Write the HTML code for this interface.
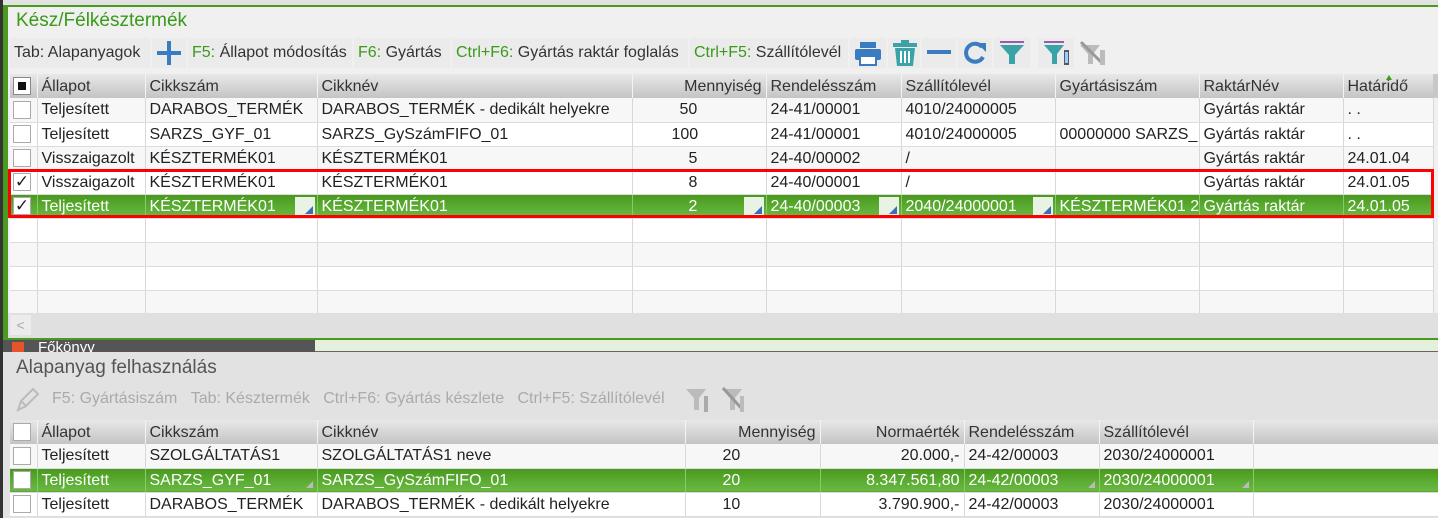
<!DOCTYPE html>
<html><head><meta charset="utf-8"><style>
*{margin:0;padding:0;box-sizing:border-box}
body{width:1438px;height:518px;overflow:hidden;background:#e2e2e2;font-family:"Liberation Sans Narrow","Liberation Sans",sans-serif;font-size:16px;color:#222;position:relative}
.abs{position:absolute}
table{border-collapse:collapse;table-layout:fixed;position:absolute}
td{height:24px;border-right:1px solid #d8d8d8;border-bottom:1px solid #dcdcdc;padding:0 4px;white-space:nowrap;overflow:hidden;line-height:23px;background:#fff;position:relative}
tr.alt td{background:#f7f7f7}
tr.h td{background:linear-gradient(#e8e8e8,#c4c4c4);border-right:1px solid #f4f4f4;border-bottom:none;height:24px;color:#333}
tr.sel td{background:linear-gradient(#4a981e,#5cae34 60%,#6cb844);color:#fff;border-right:1px solid #8cc86c}
td.r{text-align:right}
td.cb{padding:0 0 0 3px}
.box{width:18px;height:18px;border:1px solid #aaa;background:#fff;display:inline-block;vertical-align:middle;position:relative}
.tri{position:absolute;right:2px;bottom:2px;width:0;height:0;border-left:8px solid transparent;border-bottom:8px solid #3a6fb8}
.edit{position:absolute;right:2px;top:2px;bottom:2px;width:20px;background:#e9f3e4}
.trig{position:absolute;right:4px;bottom:4px;width:0;height:0;border-left:7px solid transparent;border-bottom:7px solid #bbb}
.tb{position:absolute;height:30px;background:#ebebeb;line-height:30px;padding:0 4px;font-size:16px;color:#333}
.tb b{font-weight:normal;color:#3a9a1a}
.tb2{color:#aaa;position:absolute;line-height:30px;font-size:16px}
</style></head><body>
<div class="abs" style="left:0;top:0;width:3px;height:518px;background:#333"></div>
<div class="abs" style="left:3px;top:5px;width:5px;height:333px;background:#4a9a20"></div>
<div class="abs" style="left:3px;top:5px;width:1435px;height:2px;background:#4a9a20"></div>
<div class="abs" style="left:8px;top:7px;width:1430px;height:331px;background:#f0f0f0"></div>
<div class="abs" style="left:16px;top:8px;font-size:19px;color:#3a9a1a;line-height:26px">Kész/Félkésztermék</div>
<div class="tb" style="left:10px;top:38px;width:140px">Tab: Alapanyagok</div>
<div class="tb" style="left:152px;top:38px;width:34px"><svg width="26" height="26" style="margin-top:2px"><rect x="11" y="1" width="4" height="24" fill="#3b7bc0"/><rect x="1" y="11" width="24" height="4" fill="#3b7bc0"/></svg></div>
<div class="tb" style="left:188px;top:38px;width:164px"><b>F5:</b> Állapot módosítás</div>
<div class="tb" style="left:354px;top:38px;width:96px"><b>F6:</b> Gyártás</div>
<div class="tb" style="left:452px;top:38px;width:236px"><b>Ctrl+F6:</b> Gyártás raktár foglalás</div>
<div class="tb" style="left:690px;top:38px;width:158px"><b>Ctrl+F5:</b> Szállítólevél</div>
<div class="tb" style="left:850px;top:38px;width:36px"><svg width="28" height="28" style="margin-top:1px"><rect x="6" y="3" width="16" height="6" fill="#3b7bc0"/><rect x="1" y="10" width="26" height="11" rx="2" fill="#3b7bc0"/><rect x="6" y="17" width="16" height="9" fill="#fff" stroke="#3b7bc0" stroke-width="2"/></svg></div>
<div class="tb" style="left:888px;top:38px;width:32px"><svg width="26" height="28" style="margin-top:1px"><rect x="1" y="4" width="24" height="4" fill="#3aa3a8"/><rect x="9" y="1" width="8" height="4" fill="#3aa3a8"/><path d="M3 9h20l-2 18H5z" fill="#3aa3a8"/><rect x="8" y="12" width="2" height="12" fill="#fff"/><rect x="12" y="12" width="2" height="12" fill="#fff"/><rect x="16" y="12" width="2" height="12" fill="#fff"/></svg></div>
<div class="tb" style="left:922px;top:38px;width:34px"><svg width="26" height="28"><rect x="1" y="12" width="24" height="4" fill="#3b7bc0"/></svg></div>
<div class="tb" style="left:958px;top:38px;width:34px"><svg width="26" height="28" style="margin-top:1px"><path d="M20 8A9 9 0 1 0 21 18" fill="none" stroke="#3b7bc0" stroke-width="4"/><path d="M15 4h9v9z" fill="#3b7bc0"/></svg></div>
<div class="tb" style="left:994px;top:38px;width:36px"><svg width="28" height="28"><rect x="2" y="3" width="24" height="2" fill="#9a5ab0"/><path d="M2 7h24l-9 10v9h-6v-9z" fill="#3aa3a8"/></svg></div>
<div class="tb" style="left:1038px;top:38px;width:36px"><svg width="30" height="28"><rect x="2" y="3" width="20" height="2" fill="#9a5ab0"/><path d="M2 7h20l-7 9v10h-5v-10z" fill="#3aa3a8"/><rect x="22" y="12" width="5" height="15" fill="#556"/><rect x="23" y="14" width="3" height="11" fill="#9cf"/></svg></div>
<div class="abs" style="left:1078px;top:38px"><svg width="30" height="30"><path d="M2 7h20l-7 9v10h-5v-10z" fill="#bbb"/><path d="M3 4l22 22" stroke="#999" stroke-width="3"/><rect x="22" y="12" width="5" height="15" fill="#bbb"/></svg></div>

<table style="left:10px;top:74px;width:1423px">
<colgroup><col style="width:27px"><col style="width:108px"><col style="width:172px"><col style="width:315px"><col style="width:134px"><col style="width:135px"><col style="width:154px"><col style="width:144px"><col style="width:144px"><col style="width:90px"></colgroup>
<tr class="h"><td class="cb"><span class="box" style="border-color:#888"><span style="position:absolute;left:4px;top:4px;width:8px;height:8px;background:#111"></span></span></td><td>Állapot</td><td>Cikkszám</td><td>Cikknév</td><td class="r">Mennyiség</td><td>Rendelésszám</td><td>Szállítólevél</td><td>Gyártásiszám</td><td>RaktárNév</td><td>Határidő<span style="position:absolute;left:42px;top:1px;width:0;height:0;border-left:3px solid transparent;border-right:3px solid transparent;border-bottom:5px solid #3a9a1a"></span></td></tr>
<tr class="alt"><td class="cb"><span class="box"></span></td><td>Teljesített</td><td>DARABOS_TERMÉK</td><td>DARABOS_TERMÉK - dedikált helyekre</td><td style="padding-left:47px">50</td><td>24-41/00001</td><td>4010/24000005</td><td></td><td>Gyártás raktár</td><td>. .</td></tr>
<tr><td class="cb"><span class="box"></span></td><td>Teljesített</td><td>SARZS_GYF_01</td><td>SARZS_GySzámFIFO_01</td><td style="padding-left:39px">100</td><td>24-41/00001</td><td>4010/24000005</td><td>00000000 SARZS_</td><td>Gyártás raktár</td><td>. .</td></tr>
<tr class="alt"><td class="cb"><span class="box"></span></td><td>Visszaigazolt</td><td>KÉSZTERMÉK01</td><td>KÉSZTERMÉK01</td><td style="padding-left:56px">5</td><td>24-40/00002</td><td>/</td><td></td><td>Gyártás raktár</td><td>24.01.04</td></tr>
<tr><td class="cb"><span class="box" style="text-align:center;line-height:16px;font-size:17px">✓</span></td><td>Visszaigazolt</td><td>KÉSZTERMÉK01</td><td>KÉSZTERMÉK01</td><td style="padding-left:56px">8</td><td>24-40/00001</td><td>/</td><td></td><td>Gyártás raktár</td><td>24.01.05</td></tr>
<tr class="sel"><td class="cb"><span class="box" style="text-align:center;line-height:16px;font-size:17px;color:#222">✓</span></td><td>Teljesített</td><td>KÉSZTERMÉK01<span class="edit"><span class="tri"></span></span></td><td>KÉSZTERMÉK01</td><td style="padding-left:56px">2<span class="edit"><span class="tri"></span></span></td><td>24-40/00003<span class="edit"><span class="tri"></span></span></td><td>2040/24000001<span class="edit"><span class="tri"></span></span></td><td>KÉSZTERMÉK01 2</td><td>Gyártás raktár</td><td>24.01.05</td></tr>
<tr><td></td><td></td><td></td><td></td><td></td><td></td><td></td><td></td><td></td><td></td></tr>
<tr class="alt"><td></td><td></td><td></td><td></td><td></td><td></td><td></td><td></td><td></td><td></td></tr>
<tr><td></td><td></td><td></td><td></td><td></td><td></td><td></td><td></td><td></td><td></td></tr>
<tr class="alt"><td style="height:23px"></td><td></td><td></td><td></td><td></td><td></td><td></td><td></td><td></td><td></td></tr>
</table>
<div class="abs" style="left:1433px;top:74px;width:5px;height:24px;background:#c8c8c8"></div>
<div class="abs" style="left:8px;top:169px;width:1426px;height:49px;border:3px solid #f00"></div>
<div class="abs" style="left:8px;top:313px;width:1430px;height:25px;background:#e0e0e0"></div>
<div class="abs" style="left:10px;top:315px;width:21px;height:20px;background:#ececec;color:#aaa;font-size:14px;text-align:center;line-height:20px">&lt;</div>
<div class="abs" style="left:3px;top:338px;width:1435px;height:2px;background:#4a9a20"></div>
<div class="abs" style="left:3px;top:340px;width:312px;height:12px;background:#555;overflow:hidden"><span style="position:absolute;left:9px;top:2px;width:12px;height:12px;background:#e8542a"></span><span style="position:absolute;left:35px;top:0;color:#fff;font-size:15px;line-height:16px">Főkönyv</span></div>
<div class="abs" style="left:315px;top:340px;width:1123px;height:12px;background:#e4f0dc;border-bottom:1px solid #666"></div>
<div class="abs" style="left:8px;top:352px;width:1430px;height:166px;background:#e2e2e2"></div>
<div class="abs" style="left:16px;top:355px;font-size:19px;color:#555;line-height:26px">Alapanyag felhasználás</div>
<svg class="abs" style="left:14px;top:386px" width="26" height="28"><path d="M4 24l3-9 12-12 5 5-12 12z" fill="none" stroke="#bbb" stroke-width="2"/><path d="M7 15l5 5" stroke="#bbb" stroke-width="2"/></svg>
<div class="tb2" style="left:52px;top:384px">F5: Gyártásiszám&nbsp;&nbsp;&nbsp;Tab: Késztermék&nbsp;&nbsp;&nbsp;Ctrl+F6: Gyártás készlete&nbsp;&nbsp;&nbsp;Ctrl+F5: Szállítólevél</div>
<svg class="abs" style="left:684px;top:386px" width="30" height="30"><path d="M2 3h20l-7 9v12h-5v-12z" fill="#bbb"/><rect x="20" y="10" width="4" height="16" fill="#aaa"/></svg>
<svg class="abs" style="left:720px;top:386px" width="30" height="30"><path d="M2 3h20l-7 9v12h-5v-12z" fill="#bbb"/><path d="M3 2l20 22" stroke="#999" stroke-width="3"/><rect x="20" y="10" width="4" height="16" fill="#bbb"/></svg>
<table style="left:10px;top:420px;width:1428px">
<colgroup><col style="width:27px"><col style="width:108px"><col style="width:172px"><col style="width:368px"><col style="width:135px"><col style="width:144px"><col style="width:135px"><col style="width:154px"><col style="width:185px"></colgroup>
<tr class="h"><td class="cb"><span class="box"></span></td><td>Állapot</td><td>Cikkszám</td><td>Cikknév</td><td class="r">Mennyiség</td><td class="r">Normaérték</td><td>Rendelésszám</td><td>Szállítólevél</td><td></td></tr>
<tr class="alt"><td class="cb"><span class="box"></span></td><td>Teljesített</td><td>SZOLGÁLTATÁS1</td><td>SZOLGÁLTATÁS1 neve</td><td style="padding-left:37px">20</td><td class="r">20.000,-</td><td>24-42/00003</td><td>2030/24000001</td><td></td></tr>
<tr class="sel"><td class="cb"><span class="box"></span></td><td>Teljesített</td><td>SARZS_GYF_01<span class="trig"></span></td><td>SARZS_GySzámFIFO_01</td><td style="padding-left:37px">20</td><td class="r">8.347.561,80</td><td>24-42/00003<span class="trig"></span></td><td>2030/24000001<span class="trig"></span></td><td></td></tr>
<tr><td class="cb"><span class="box"></span></td><td>Teljesített</td><td>DARABOS_TERMÉK</td><td>DARABOS_TERMÉK - dedikált helyekre</td><td style="padding-left:37px">10</td><td class="r">3.790.900,-</td><td>24-42/00003</td><td>2030/24000001</td><td></td></tr>
</table>
</body></html>
